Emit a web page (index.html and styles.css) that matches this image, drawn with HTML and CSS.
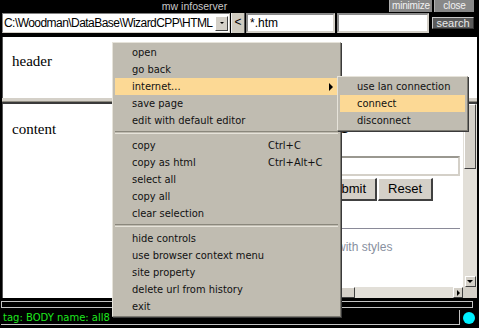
FILE: index.html
```html
<!DOCTYPE html>
<html lang="en">
<head>
  <meta charset="UTF-8">
  <title>mw infoserver</title>
  <link rel="stylesheet" href="styles.css">
</head>
<body>
  <div class="window">
    <div class="titlebar">
      <span class="title">mw infoserver</span>
      <span class="tbtn tbtn-min">minimize</span>
      <span class="tbtn tbtn-close">close</span>
    </div>

    <div class="toolbar">
      <div class="combo">
        <span class="combo-text">C:\Woodman\DataBase\WizardCPP\HTML</span>
        <span class="combo-btn"><i></i></span>
      </div>
      <span class="back">&lt;</span>
      <input class="field field-mask" value="*.htm">
      <input class="field field-query" value="">
      <span class="search">search</span>
    </div>

    <div class="header">header</div>
    <div class="splitter"></div>

    <div class="content">
      <div class="pane">content</div>
      <div class="frame">
        <div class="frame-main">
          <div class="page">
            <h2 class="page-title">Testing</h2>
            <input class="page-input" value="">
            <div class="page-buttons">
              <span class="pbtn">Submit</span>
              <span class="pbtn">Reset</span>
            </div>
            <hr class="page-rule">
            <p class="page-note">Sample of text with styles</p>
          </div>
          <div class="vscroll">
            <span class="sb-thumb"></span>
            <span class="sb-track"></span>
            <span class="sb-btn sb-down"><i></i></span>
          </div>
        </div>
        <div class="hscroll">
          <span class="hs-thumb"></span>
          <span class="hs-track"></span>
          <span class="sb-btn sb-right"><i></i></span>
          <span class="corner"></span>
        </div>
      </div>
    </div>

    <div class="progress"></div>

    <div class="status">
      <div class="status-text">tag: BODY name: all8</div>
      <span class="led"></span>
    </div>
  </div>

  <!-- context menu -->
  <div class="menu menu-main">
    <div class="item">open</div>
    <div class="item">go back</div>
    <div class="item active has-sub">internet...<span class="arrow"></span></div>
    <div class="item">save page</div>
    <div class="item">edit with default editor</div>
    <div class="sep"></div>
    <div class="item"><span class="label">copy</span><span class="key">Ctrl+C</span></div>
    <div class="item"><span class="label">copy as html</span><span class="key">Ctrl+Alt+C</span></div>
    <div class="item">select all</div>
    <div class="item">copy all</div>
    <div class="item">clear selection</div>
    <div class="sep"></div>
    <div class="item">hide controls</div>
    <div class="item">use browser context menu</div>
    <div class="item">site property</div>
    <div class="item">delete url from history</div>
    <div class="item">exit</div>
  </div>

  <div class="menu menu-sub">
    <div class="item">use lan connection</div>
    <div class="item active">connect</div>
    <div class="item">disconnect</div>
  </div>
</body>
</html>
```

FILE: styles.css
```css
body {
  margin: 0;
  width: 479px;
  height: 328px;
  background-color: #000;
  font-family: "DejaVu Sans", sans-serif;
  overflow: hidden;
}

.window {
  display: flex;
  flex-direction: column;
  height: 328px;
}

/* title bar */
.titlebar {
  display: flex;
  height: 12px;
  font-family: "Liberation Sans", sans-serif;
  font-size: 10.5px;
  line-height: 12px;
  padding-right: 5px;
}

.title {
  flex: 1;
  text-align: center;
  color: #c8c8c8;
}

.tbtn {
  background-color: #888;
  color: #f2f2f2;
  text-align: center;
  border-left: 1px solid #b0b0b0;
  font-size: 10px;
  letter-spacing: -0.2px;
}

.tbtn-min { width: 42px; }
.tbtn-close { width: 39px; margin-left: 2px; }

/* address row */
.toolbar {
  display: flex;
  align-items: flex-start;
  height: 23px;
  padding: 1px 0 0 2px;
  box-sizing: border-box;
  font-family: "Liberation Sans", sans-serif;
}

.combo {
  display: flex;
  align-items: center;
  width: 228px;
  height: 20px;
  box-sizing: border-box;
  background-color: #fff;
  border: 1px solid #808080;
  border-right-color: #d4d0c8;
  border-bottom-color: #d4d0c8;
}

.combo-text {
  flex: 1;
  font-size: 12px;
  letter-spacing: -0.55px;
  padding-left: 1px;
  white-space: nowrap;
}

.combo-btn {
  display: flex;
  align-items: center;
  justify-content: center;
  width: 11px;
  height: 13px;
  margin-right: 1px;
  background-color: #d4d0c8;
  border: 1px solid #fff;
  border-right-color: #404040;
  border-bottom-color: #404040;
}

.combo-btn i {
  width: 0;
  height: 0;
  border-left: 2px solid transparent;
  border-right: 2px solid transparent;
  border-top: 2px solid #000;
}

.back {
  width: 14px;
  height: 20px;
  margin-left: 1px;
  box-sizing: border-box;
  background-color: #cfcbc0;
  border-left: 1px solid #eee;
  border-right: 1px solid #555;
  font-size: 12px;
  line-height: 19px;
  text-align: center;
}

.field {
  height: 20px;
  box-sizing: border-box;
  margin: 0 0 0 1px;
  padding: 0 2px;
  background-color: #fff;
  border: 2px solid #8a8a8a;
  border-right-color: #d4d0c8;
  border-bottom-color: #d4d0c8;
  font-family: "Liberation Sans", sans-serif;
  font-size: 12px;
  outline: none;
}

.field-mask { width: 89px; }
.field-query { width: 92px; margin-left: 2px; }

.search {
  width: 42px;
  height: 12px;
  margin: 4px 0 0 3px;
  box-sizing: border-box;
  background-color: #5a5a5a;
  border: 1px solid #c8c8c8;
  border-right-color: #333;
  border-bottom-color: #333;
  color: #e8e8e8;
  font-size: 11px;
  line-height: 10px;
  text-align: center;
}

/* header */
.header {
  height: 61px;
  margin: 2px 2px 0 2px;
  padding: 16px 0 0 9px;
  box-sizing: border-box;
  background-color: #fff;
  border-left: 1px solid #555;
  font-family: "Liberation Serif", serif;
  font-size: 15px;
}

.splitter {
  height: 6px;
  margin: 0 2px;
  background: linear-gradient(#d4d0c8 0 3px, #8e8b80 3px 4px, #3a3a3a 4px 6px);
}

/* content */
.content {
  display: flex;
  height: 194px;
  margin: 0 2px;
  background-color: #fff;
  border-left: 1px solid #555;
}

.pane {
  flex: 1;
  padding: 17px 0 0 9px;
  font-family: "Liberation Serif", serif;
  font-size: 15px;
}

.frame {
  display: flex;
  flex-direction: column;
  width: 228px;
}

.frame-main {
  flex: 1;
  display: flex;
}

.page {
  flex: 1;
  padding: 0 3px 0 8px;
  font-family: "Liberation Sans", sans-serif;
  overflow: hidden;
}

.page-title {
  margin: 0 0 0 24px;
  padding-top: 8px;
  font-size: 20px;
  line-height: 20px;
}

.page-input {
  display: block;
  width: 100%;
  height: 20px;
  margin: 24px 0 0 auto;
  box-sizing: border-box;
  border: 2px solid #9a9890;
  border-right-color: #d4d0c8;
  border-bottom-color: #d4d0c8;
}

.page-buttons {
  display: flex;
  justify-content: flex-end;
  margin: 2px 27px 0 0;
  gap: 1px;
}

.pbtn {
  height: 23px;
  padding: 0 9px;
  box-sizing: border-box;
  background-color: #d4d0c8;
  border: 1px solid #fff;
  border-right: 2px solid #404040;
  border-bottom: 2px solid #404040;
  font-size: 13px;
  line-height: 20px;
}

.page-rule {
  margin: 27px 0 0 0;
  border: none;
  border-top: 1px solid #8a8a98;
}

.page-note {
  margin: 11px 0 0 0;
  color: #8890a0;
  font-size: 12px;
}

.vscroll {
  display: flex;
  flex-direction: column;
  width: 14px;
  background-color: #e2dfd8;
}

.sb-btn {
  display: flex;
  align-items: center;
  justify-content: center;
  width: 11px;
  height: 11px;
  margin: 0 auto;
  box-sizing: border-box;
  background-color: #d4d0c8;
  border: 1px solid #fff;
  border-right-color: #404040;
  border-bottom-color: #404040;
}

.sb-thumb {
  height: 63px;
  margin: 0 1px;
  background-color: #d4d0c8;
  border: 1px solid #fff;
  border-right-color: #404040;
  border-bottom-color: #404040;
}

.sb-track { flex: 1; }

.sb-down i {
  border-left: 3px solid transparent;
  border-right: 3px solid transparent;
  border-top: 3px solid #000;
}

.hscroll {
  display: flex;
  height: 11px;
  background-color: #e2dfd8;
}

.hs-thumb {
  width: 104px;
  background-color: #d4d0c8;
  border: 1px solid #fff;
  border-right-color: #404040;
  border-bottom-color: #404040;
}

.hs-track { flex: 1; }

.sb-right {
  height: 11px;
  width: 10px;
  margin: 0;
}

.sb-right i {
  border-top: 3px solid transparent;
  border-bottom: 3px solid transparent;
  border-left: 3px solid #000;
}

.corner {
  width: 14px;
  background-color: #d4d0c8;
}

/* progress + status */
.progress {
  height: 7px;
  width: 472px;
  margin: 3px 0 0 1px;
  box-sizing: border-box;
  border: 1px solid #c4c4c4;
}

.status {
  display: flex;
  align-items: center;
  margin-top: 2px;
  height: 15px;
}

.status-text {
  width: 459px;
  height: 15px;
  margin-left: 1px;
  box-sizing: border-box;
  border: 1px solid #c4c4c4;
  border-left: none;
  border-top: none;
  color: #1ee61e;
  font-size: 10px;
  line-height: 15px;
  padding-left: 2px;
}

.led {
  width: 12px;
  height: 12px;
  margin-left: 3px;
  border-radius: 50%;
  background-color: #00f0ff;
}

/* context menu */
.menu {
  position: absolute;
  box-sizing: border-box;
  padding: 1px 2px;
  background-color: #c0bcb1;
  border: 1px solid #e6e3da;
  border-right-color: #7c7a72;
  border-bottom-color: #7c7a72;
  box-shadow: 1px 1px 0 #3a3a3a;
  font-family: "DejaVu Sans Condensed", "DejaVu Sans", sans-serif;
  font-stretch: condensed;
  font-size: 11px;
  color: #111;
}

.menu-main {
  left: 112px;
  top: 42px;
  width: 229px;
}

.menu-sub {
  left: 337px;
  top: 76px;
  width: 131px;
}

.item {
  position: relative;
  display: flex;
  height: 17px;
  line-height: 17px;
  padding-left: 17px;
  white-space: nowrap;
}

.item.active {
  background-color: #fcd995;
}

.label {
  width: 136px;
}

.arrow {
  position: absolute;
  right: 5px;
  top: 5px;
  border-top: 4px solid transparent;
  border-bottom: 4px solid transparent;
  border-left: 4px solid #000;
}

.sep {
  height: 1px;
  margin: 2px 0 3px;
  border-top: 1px solid #8a877c;
  border-bottom: 1px solid #e6e3da;
}
```
